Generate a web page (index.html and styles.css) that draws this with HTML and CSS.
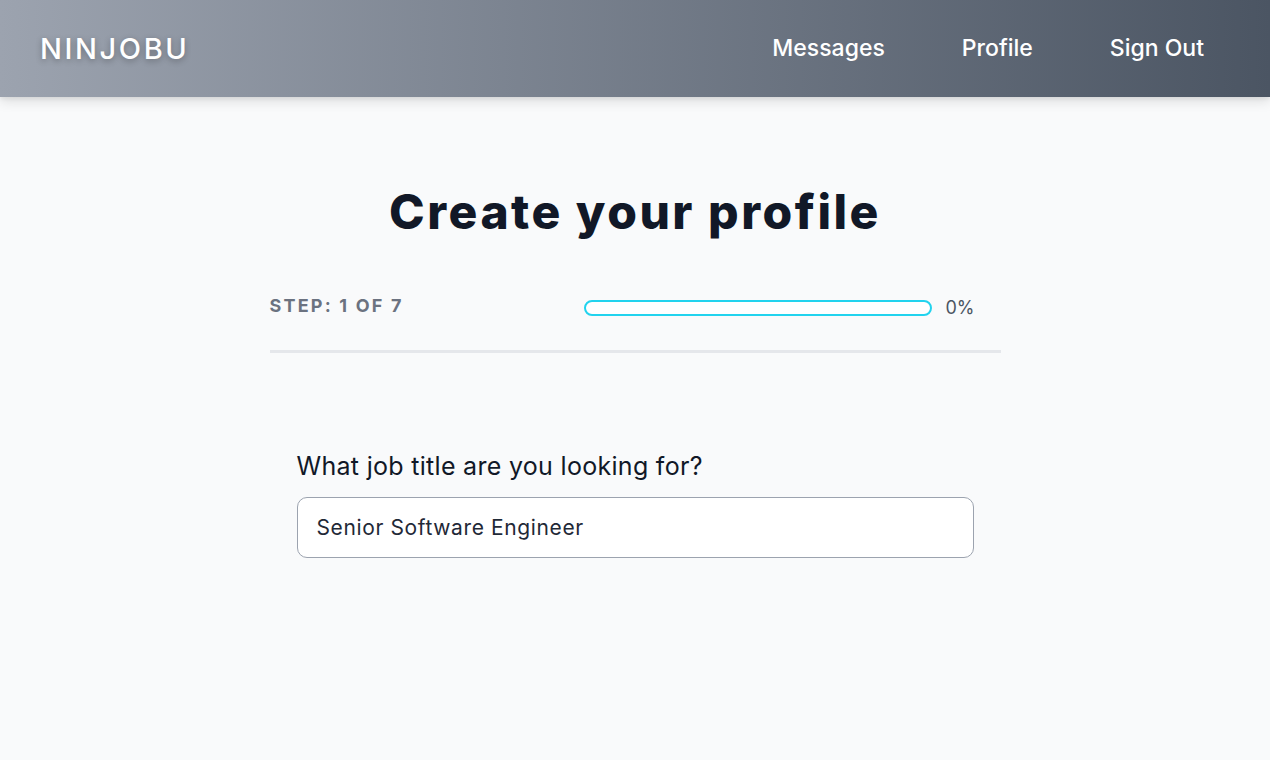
FILE: index.html
```html
<!DOCTYPE html>
<html lang="en">
<head>
<meta charset="utf-8">
<title>Ninjobu - Create your profile</title>
<link rel="stylesheet" href="styles.css">
</head>
<body>
<header class="topbar">
  <a class="logo" href="#">NINJOBU</a>
  <nav class="nav">
    <a href="#">Messages</a>
    <a href="#">Profile</a>
    <a href="#">Sign Out</a>
  </nav>
</header>
<main class="content">
  <h1 class="title">Create your profile</h1>
  <div class="steps">
    <span class="step-label">Step: 1 of 7</span>
    <div class="progress-wrap">
      <div class="progress"><div class="progress-fill" style="width:0%"></div></div>
      <span class="progress-pct">0%</span>
    </div>
  </div>
  <form class="question">
    <label class="q-label" for="jobtitle">What job title are you looking for?</label>
    <input id="jobtitle" class="q-input" type="text" value="Senior Software Engineer">
  </form>
</main>
</body>
</html>
```
FILE: styles.css
```css
* { box-sizing: border-box; }
html, body { margin: 0; padding: 0; }
body {
  background: #f9fafb;
  font-family: Inter, "Noto Sans", "Liberation Sans", sans-serif;
  color: #111827;
  min-height: 760px;
}
.topbar {
  height: 97px;
  display: flex;
  align-items: center;
  justify-content: space-between;
  padding: 0 66px 0 40px;
  background: linear-gradient(to right, #9ca3af, #4b5563);
  box-shadow: 0 4px 12px rgba(0,0,0,0.12), 0 2px 4px rgba(0,0,0,0.06);
}
.logo {
  color: #fff;
  text-decoration: none;
  font-size: 29px;
  font-weight: 500;
  letter-spacing: 2.6px;
  text-shadow: 0 2px 6px rgba(0,0,0,0.3);
}
.nav {
  display: flex;
  gap: 77px;
  margin-top: -1px;
}
.nav a {
  color: #fff;
  text-decoration: none;
  font-size: 23px;
  font-weight: 500;
}
.content {
  width: 731px;
  margin: 0 auto;
}
.title {
  margin: 0;
  padding-top: 87px;
  text-align: center;
  font-size: 48px;
  line-height: 56px;
  font-weight: 800;
  letter-spacing: 2.5px;
  color: #111827;
}
.steps {
  margin-top: 56px;
  display: flex;
  align-items: flex-start;
  padding-bottom: 33px;
  border-bottom: 3px solid #e5e7eb;
}
.step-label {
  font-size: 18px;
  font-weight: 700;
  letter-spacing: 2.2px;
  text-transform: uppercase;
  color: #6b7280;
  line-height: 20px;
  width: 314px;
}
.progress-wrap {
  display: flex;
  align-items: center;
  gap: 14px;
  padding-top: 3px;
}
.progress {
  width: 348px;
  height: 16px;
  border: 2px solid #22d3ee;
  border-radius: 999px;
  background: #fff;
  overflow: hidden;
}
.progress-fill {
  height: 100%;
  background: #22d3ee;
}
.progress-pct {
  font-size: 18px;
  color: #4b5563;
  line-height: 18px;
}
.question {
  margin: 98px 27px 0;
  display: flex;
  flex-direction: column;
}
.q-label {
  font-size: 25px;
  line-height: 30px;
  letter-spacing: 0.3px;
  color: #111827;
  margin-bottom: 16px;
}
.q-input {
  width: 677px;
  height: 61px;
  border: 1px solid #9ca3af;
  border-radius: 10px;
  background: #fff;
  padding: 0 19px;
  font-family: inherit;
  font-size: 21px;
  letter-spacing: 0.62px;
  color: #1f2937;
  outline: none;
}
```
